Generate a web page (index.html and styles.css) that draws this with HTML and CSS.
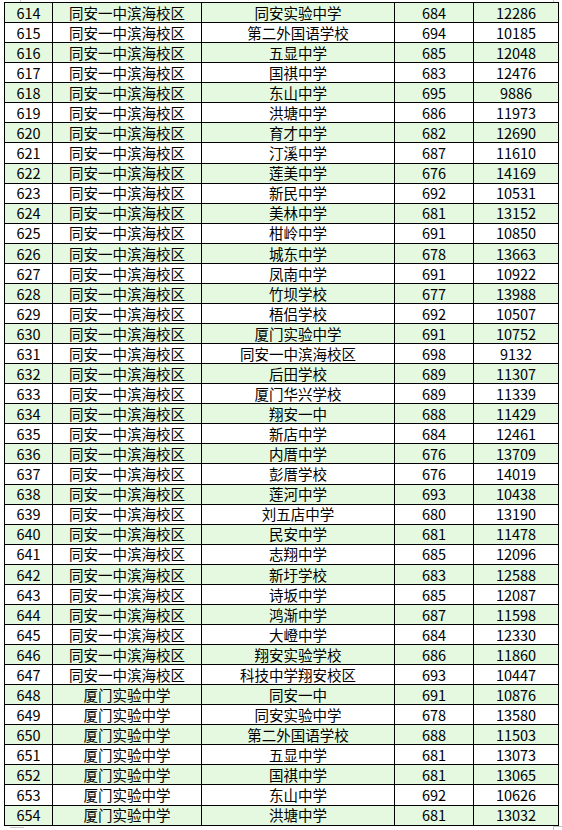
FILE: index.html
```html
<!DOCTYPE html>
<html lang="zh">
<head>
<meta charset="utf-8">
<title>录取名单</title>
<link rel="stylesheet" href="styles.css">
</head>
<body>
<div class="page">
  <span class="mark mark-tl"></span>
  <span class="mark mark-tr"></span>
  <span class="mark mark-bl"></span>
  <span class="mark mark-br"></span>
  <table class="list">
    <colgroup>
      <col class="c-no"><col class="c-from"><col class="c-to"><col class="c-score"><col class="c-rank">
    </colgroup>
    <tbody>
      <tr><td>614</td><td>同安一中滨海校区</td><td>同安实验中学</td><td>684</td><td>12286</td></tr>
      <tr><td>615</td><td>同安一中滨海校区</td><td>第二外国语学校</td><td>694</td><td>10185</td></tr>
      <tr><td>616</td><td>同安一中滨海校区</td><td>五显中学</td><td>685</td><td>12048</td></tr>
      <tr><td>617</td><td>同安一中滨海校区</td><td>国祺中学</td><td>683</td><td>12476</td></tr>
      <tr><td>618</td><td>同安一中滨海校区</td><td>东山中学</td><td>695</td><td>9886</td></tr>
      <tr><td>619</td><td>同安一中滨海校区</td><td>洪塘中学</td><td>686</td><td>11973</td></tr>
      <tr><td>620</td><td>同安一中滨海校区</td><td>育才中学</td><td>682</td><td>12690</td></tr>
      <tr><td>621</td><td>同安一中滨海校区</td><td>汀溪中学</td><td>687</td><td>11610</td></tr>
      <tr><td>622</td><td>同安一中滨海校区</td><td>莲美中学</td><td>676</td><td>14169</td></tr>
      <tr><td>623</td><td>同安一中滨海校区</td><td>新民中学</td><td>692</td><td>10531</td></tr>
      <tr><td>624</td><td>同安一中滨海校区</td><td>美林中学</td><td>681</td><td>13152</td></tr>
      <tr><td>625</td><td>同安一中滨海校区</td><td>柑岭中学</td><td>691</td><td>10850</td></tr>
      <tr><td>626</td><td>同安一中滨海校区</td><td>城东中学</td><td>678</td><td>13663</td></tr>
      <tr><td>627</td><td>同安一中滨海校区</td><td>凤南中学</td><td>691</td><td>10922</td></tr>
      <tr><td>628</td><td>同安一中滨海校区</td><td>竹坝学校</td><td>677</td><td>13988</td></tr>
      <tr><td>629</td><td>同安一中滨海校区</td><td>梧侣学校</td><td>692</td><td>10507</td></tr>
      <tr><td>630</td><td>同安一中滨海校区</td><td>厦门实验中学</td><td>691</td><td>10752</td></tr>
      <tr><td>631</td><td>同安一中滨海校区</td><td>同安一中滨海校区</td><td>698</td><td>9132</td></tr>
      <tr><td>632</td><td>同安一中滨海校区</td><td>后田学校</td><td>689</td><td>11307</td></tr>
      <tr><td>633</td><td>同安一中滨海校区</td><td>厦门华兴学校</td><td>689</td><td>11339</td></tr>
      <tr><td>634</td><td>同安一中滨海校区</td><td>翔安一中</td><td>688</td><td>11429</td></tr>
      <tr><td>635</td><td>同安一中滨海校区</td><td>新店中学</td><td>684</td><td>12461</td></tr>
      <tr><td>636</td><td>同安一中滨海校区</td><td>内厝中学</td><td>676</td><td>13709</td></tr>
      <tr><td>637</td><td>同安一中滨海校区</td><td>彭厝学校</td><td>676</td><td>14019</td></tr>
      <tr><td>638</td><td>同安一中滨海校区</td><td>莲河中学</td><td>693</td><td>10438</td></tr>
      <tr><td>639</td><td>同安一中滨海校区</td><td>刘五店中学</td><td>680</td><td>13190</td></tr>
      <tr><td>640</td><td>同安一中滨海校区</td><td>民安中学</td><td>681</td><td>11478</td></tr>
      <tr><td>641</td><td>同安一中滨海校区</td><td>志翔中学</td><td>685</td><td>12096</td></tr>
      <tr><td>642</td><td>同安一中滨海校区</td><td>新圩学校</td><td>683</td><td>12588</td></tr>
      <tr><td>643</td><td>同安一中滨海校区</td><td>诗坂中学</td><td>685</td><td>12087</td></tr>
      <tr><td>644</td><td>同安一中滨海校区</td><td>鸿渐中学</td><td>687</td><td>11598</td></tr>
      <tr><td>645</td><td>同安一中滨海校区</td><td>大嶝中学</td><td>684</td><td>12330</td></tr>
      <tr><td>646</td><td>同安一中滨海校区</td><td>翔安实验学校</td><td>686</td><td>11860</td></tr>
      <tr><td>647</td><td>同安一中滨海校区</td><td>科技中学翔安校区</td><td>693</td><td>10447</td></tr>
      <tr><td>648</td><td>厦门实验中学</td><td>同安一中</td><td>691</td><td>10876</td></tr>
      <tr><td>649</td><td>厦门实验中学</td><td>同安实验中学</td><td>678</td><td>13580</td></tr>
      <tr><td>650</td><td>厦门实验中学</td><td>第二外国语学校</td><td>688</td><td>11503</td></tr>
      <tr><td>651</td><td>厦门实验中学</td><td>五显中学</td><td>681</td><td>13073</td></tr>
      <tr><td>652</td><td>厦门实验中学</td><td>国祺中学</td><td>681</td><td>13065</td></tr>
      <tr><td>653</td><td>厦门实验中学</td><td>东山中学</td><td>692</td><td>10626</td></tr>
      <tr><td>654</td><td>厦门实验中学</td><td>洪塘中学</td><td>681</td><td>13032</td></tr>
    </tbody>
  </table>
</div>
</body>
</html>
```

FILE: styles.css
```css
html, body {
  margin: 0;
  padding: 0;
  background: #ffffff;
}

.page {
  position: relative;
  width: 562px;
  height: 830px;
  padding: 2px 0 0 4px;
  box-sizing: border-box;
}

.list {
  border-collapse: collapse;
  table-layout: fixed;
  width: 554px;
  font-family: "Noto Sans CJK SC", "Noto Sans", sans-serif;
  font-size: 14.5px;
  line-height: 1;
  color: #000000;
}

.c-no { width: 48px; }
.c-from { width: 149px; }
.c-to { width: 193px; }
.c-score { width: 79px; }
.c-rank { width: 85px; }

.list tr {
  height: 20.07px;
}

.list tr:nth-child(odd) {
  background: #e4f9df;
}

.list td {
  border: 1px solid #000000;
  padding: 1px 0 0 0;
  text-align: center;
  vertical-align: middle;
  white-space: nowrap;
  overflow: hidden;
}

.mark {
  position: absolute;
  border-color: #c8c8c8;
  border-style: solid;
  border-width: 0;
}

.mark-tl {
  left: 10px;
  top: 0;
  width: 10px;
  height: 2px;
  border-right-width: 1px;
}

.mark-tr {
  right: 0;
  top: 0;
  width: 8px;
  height: 2px;
  border-left-width: 1px;
}

.mark-bl {
  left: 10px;
  bottom: 0;
  width: 14px;
  height: 2px;
  border-top-width: 1px;
}

.mark-br {
  right: 0;
  bottom: 0;
  width: 8px;
  height: 3px;
  border-top-width: 1px;
  border-left-width: 1px;
}
```
